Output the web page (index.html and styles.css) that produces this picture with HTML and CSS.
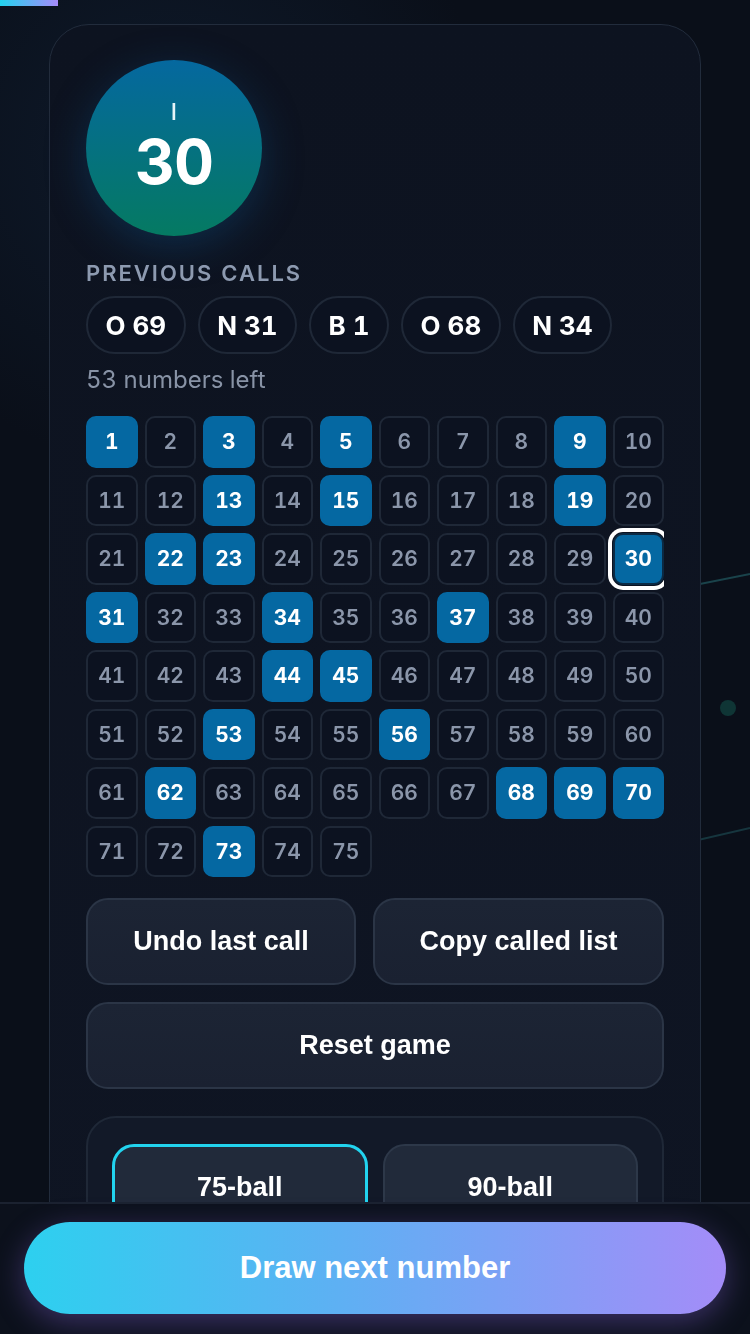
FILE: index.html
```html
<!DOCTYPE html>
<html lang="en">
<head>
    <meta charset="UTF-8">
    <meta name="viewport" content="width=device-width, initial-scale=1.0">
    <title>Bingo Caller</title>
    <link rel="stylesheet" href="styles.css">
</head>
<body>
    <div class="progress"></div>

    <svg class="backdrop" width="750" height="1334" viewBox="0 0 750 1334">
        <line x1="560" y1="612" x2="750" y2="574" stroke="#1f5058" stroke-width="2" opacity="0.8"/>
        <line x1="560" y1="872" x2="750" y2="828" stroke="#1f5058" stroke-width="2" opacity="0.6"/>
        <circle cx="728" cy="708" r="8" fill="#0f3a38" opacity="0.9"/>
    </svg>

    <main class="card">
        <div class="ball">
            <span class="ball-letter">I</span>
            <span class="ball-number">30</span>
        </div>

        <h2 class="label">Previous calls</h2>
        <div class="chips">
            <span class="chip">O 69</span>
            <span class="chip">N 31</span>
            <span class="chip">B 1</span>
            <span class="chip">O 68</span>
            <span class="chip">N 34</span>
        </div>
        <p class="left">53 numbers left</p>

        <div class="board">
            <div class="cell on">1</div><div class="cell">2</div><div class="cell on">3</div><div class="cell">4</div><div class="cell on">5</div>
            <div class="cell">6</div><div class="cell">7</div><div class="cell">8</div><div class="cell on">9</div><div class="cell">10</div>
            <div class="cell">11</div><div class="cell">12</div><div class="cell on">13</div><div class="cell">14</div><div class="cell on">15</div>
            <div class="cell">16</div><div class="cell">17</div><div class="cell">18</div><div class="cell on">19</div><div class="cell">20</div>
            <div class="cell">21</div><div class="cell on">22</div><div class="cell on">23</div><div class="cell">24</div><div class="cell">25</div>
            <div class="cell">26</div><div class="cell">27</div><div class="cell">28</div><div class="cell">29</div><div class="cell on current">30</div>
            <div class="cell on">31</div><div class="cell">32</div><div class="cell">33</div><div class="cell on">34</div><div class="cell">35</div>
            <div class="cell">36</div><div class="cell on">37</div><div class="cell">38</div><div class="cell">39</div><div class="cell">40</div>
            <div class="cell">41</div><div class="cell">42</div><div class="cell">43</div><div class="cell on">44</div><div class="cell on">45</div>
            <div class="cell">46</div><div class="cell">47</div><div class="cell">48</div><div class="cell">49</div><div class="cell">50</div>
            <div class="cell">51</div><div class="cell">52</div><div class="cell on">53</div><div class="cell">54</div><div class="cell">55</div>
            <div class="cell on">56</div><div class="cell">57</div><div class="cell">58</div><div class="cell">59</div><div class="cell">60</div>
            <div class="cell">61</div><div class="cell on">62</div><div class="cell">63</div><div class="cell">64</div><div class="cell">65</div>
            <div class="cell">66</div><div class="cell">67</div><div class="cell on">68</div><div class="cell on">69</div><div class="cell on">70</div>
            <div class="cell">71</div><div class="cell">72</div><div class="cell on">73</div><div class="cell">74</div><div class="cell">75</div>
        </div>

        <div class="actions">
            <button class="btn">Undo last call</button>
            <button class="btn">Copy called list</button>
            <button class="btn wide">Reset game</button>
        </div>

        <section class="modes">
            <button class="btn mode active">75-ball</button>
            <button class="btn mode">90-ball</button>
        </section>
    </main>

    <footer class="bar">
        <button class="draw">Draw next number</button>
    </footer>
</body>
</html>
```

FILE: styles.css
```css
body {
    margin: 0;
    min-height: 100vh;
    background: radial-gradient(circle at 170px 150px, #0e1a2b 0, #0a0f19 320px), #0a0f19;
    font-family: Inter, "Noto Sans", sans-serif;
    font-variant-numeric: tabular-nums;
    color: #fff;
    padding: 24px 0 200px;
    overflow: hidden;
}
.progress {
    position: fixed;
    top: 0;
    left: 0;
    width: 58px;
    height: 6px;
    background: linear-gradient(90deg, #22d3ee, #a78bfa);
    z-index: 5;
}
.backdrop {
    position: fixed;
    top: 0;
    left: 0;
    z-index: 0;
}
.card {
    position: relative;
    z-index: 1;
    margin: 0 49px;
    padding: 35px 36px 40px;
    border: 1px solid #222c3c;
    border-radius: 40px;
    background: linear-gradient(180deg, #0d1320, #0f1523);
}
.ball {
    box-sizing: border-box;
    width: 176px;
    height: 176px;
    padding-top: 42px;
    border-radius: 50%;
    background: linear-gradient(180deg, #05689f, #057a62);
    box-shadow: 0 10px 40px rgba(14, 90, 150, 0.35);
    display: flex;
    flex-direction: column;
    align-items: center;
}
.ball-letter {
    font-size: 23px;
    font-weight: 500;
    line-height: 20px;
    color: #e6f4f8;
}
.ball-number {
    margin-top: 12px;
    font-size: 62px;
    font-weight: 700;
    line-height: 56px;
    letter-spacing: -1px;
}
.label {
    margin: 24px 0 9px;
    font-size: 22px;
    line-height: 27px;
    font-weight: 600;
    letter-spacing: 2px;
    text-transform: uppercase;
    color: #8d9ab0;
}
.chips {
    display: flex;
    gap: 12px;
}
.chip {
    height: 58px;
    box-sizing: border-box;
    padding: 0 17.5px;
    display: flex;
    align-items: center;
    border: 2px solid #1f2837;
    border-radius: 30px;
    background: #0c1220;
    font-size: 26px;
    font-weight: 700;
}
.left {
    margin: 11px 0 22px;
    font-size: 24px;
    line-height: 29px;
    color: #8893a6;
}
.board {
    display: grid;
    grid-template-columns: repeat(10, 1fr);
    gap: 7px;
    overflow-x: hidden;
}
.cell {
    aspect-ratio: 1;
    display: flex;
    align-items: center;
    justify-content: center;
    border: 2px solid #1f2837;
    border-radius: 10px;
    background: #0c1220;
    font-size: 21px;
    font-weight: 600;
    color: #8b96aa;
}
.cell.on {
    background: #0568a2;
    border-color: #0568a2;
    color: #fff;
    font-weight: 700;
}
.cell.current {
    border-color: #0b2a44;
    box-shadow: 0 0 0 1px #0b1220, 0 0 0 5px #fff;
}
.actions {
    display: grid;
    grid-template-columns: 270px 1fr;
    gap: 17px;
    margin-top: 21px;
}
.btn {
    height: 87px;
    border: 2px solid #2b3546;
    border-radius: 22px;
    background: linear-gradient(180deg, #1c2434, #1a2131);
    color: #fff;
    font-family: "Liberation Sans", Arial, sans-serif;
    font-size: 27px;
    font-weight: 700;
}
.btn.wide {
    grid-column: span 2;
}
.modes {
    display: grid;
    grid-template-columns: 1fr 1fr;
    gap: 15px;
    margin-top: 27px;
    padding: 26px 24px 120px;
    border: 2px solid #1f2837;
    border-radius: 30px;
    background: #121928;
}
.mode {
    background: #212a3a;
    border-color: #2d3849;
}
.mode.active {
    border: 3px solid #22d3ee;
}
.bar {
    position: fixed;
    left: 0;
    right: 0;
    bottom: 0;
    z-index: 4;
    padding: 18px 24px 20px;
    border-top: 2px solid #1b2230;
    background: #0c111c;
}
.draw {
    display: block;
    width: 100%;
    height: 92px;
    border: none;
    border-radius: 46px;
    background: linear-gradient(90deg, #2dd0ef, #5eb0f3 45%, #a48cf8);
    box-shadow: 0 8px 30px rgba(150, 110, 240, 0.35);
    color: #fff;
    font-family: "Liberation Sans", Arial, sans-serif;
    font-size: 31px;
    font-weight: 700;
}
```
